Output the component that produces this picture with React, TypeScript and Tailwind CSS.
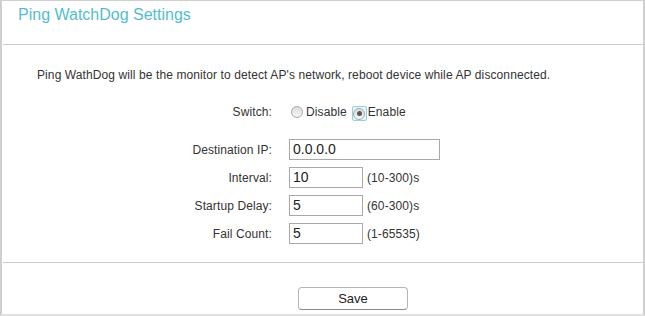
import React from "react";

function Radio({ checked, focused }: { checked?: boolean; focused?: boolean }) {
  return (
    <span
      className={
        "inline-flex items-center justify-center w-[15px] h-[15px] rounded-[2px] " +
        (focused ? "border border-[#8fd3e0] bg-[#e8f6f9]" : "border border-transparent")
      }
    >
      <span className="flex items-center justify-center w-[12px] h-[12px] rounded-full border border-[#a8a8a8] bg-gradient-to-b from-[#dcdcdc] to-[#f6f6f6]">
        {checked && <span className="w-[5px] h-[5px] rounded-full bg-[#5a5a5a]" />}
      </span>
    </span>
  );
}

function Row({ label, value, wide, hint }: { label: string; value: string; wide?: boolean; hint?: string }) {
  return (
    <div className="flex items-center h-[21px]">
      <div className="w-[270px] text-right text-[12px] tracking-[0.1px]">{label}</div>
      <div
        className={
          "ml-[17px] h-[21px] border border-[#a9a9a9] bg-white flex items-center pl-[3px] text-[14px] text-[#222] " +
          (wide ? "w-[151px]" : "w-[74px]")
        }
      >
        {value}
      </div>
      {hint && <div className="ml-[4px] text-[12px] tracking-[0.1px]">{hint}</div>}
    </div>
  );
}

export default function App() {
  return (
    <div className="w-[645px] h-[316px] bg-white font-['Liberation_Sans',Arial,sans-serif] text-[#333]">
      <div className="h-[316px] border-t border-l-2 border-r-2 border-b-2 border-t-[#cfcfcf] border-l-[#cfcfcf] border-r-[#cfcfcf] border-b-[#e2e2e2] flex flex-col">
        <div className="h-[43px] pl-[16px] pt-[4px] text-[16px] leading-[20px] text-[#55bccf]">
          Ping WatchDog Settings
        </div>
        <div className="ml-[1px] h-px bg-[#cccccc]" />
        <div className="pt-[23px] pl-[35px] text-[12px] leading-[14px] tracking-[0.1px]">
          Ping WathDog will be the monitor to detect AP's network, reboot device while AP disconnected.
        </div>
        <div className="mt-[22px] flex items-center h-[16px] text-[12px] tracking-[0.1px]">
          <div className="w-[270px] text-right">Switch:</div>
          <div className="ml-[17px] flex items-center">
            <Radio />
            <span className="ml-[2px]">Disable</span>
            <span className="ml-[5px]">
              <Radio checked focused />
            </span>
            <span className="ml-[1px]">Enable</span>
          </div>
        </div>
        <div className="mt-[19px] flex flex-col gap-[7px]">
          <Row label="Destination IP:" value="0.0.0.0" wide />
          <Row label="Interval:" value="10" hint="(10-300)s" />
          <Row label="Startup Delay:" value="5" hint="(60-300)s" />
          <Row label="Fail Count:" value="5" hint="(1-65535)" />
        </div>
        <div className="mt-[18px] ml-[1px] h-px bg-[#cccccc]" />
        <div className="mt-[24px] flex">
          <button className="ml-[296px] w-[110px] h-[23px] rounded-[4px] border border-[#b5b5b5] border-b-[#8a8a8a] bg-white text-[13px] text-[#222] font-['Liberation_Sans',Arial,sans-serif]">
            Save
          </button>
        </div>
      </div>
    </div>
  );
}
